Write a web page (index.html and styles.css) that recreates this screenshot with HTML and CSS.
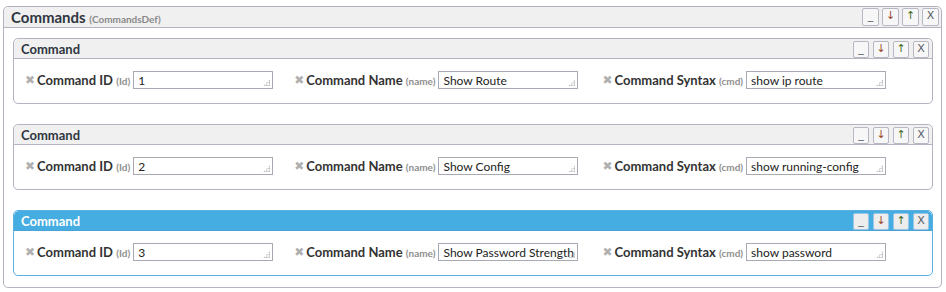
FILE: index.html
```html
<!DOCTYPE html>
<html lang="en">
<head>
    <meta charset="UTF-8">
    <title>Commands</title>
    <link rel="stylesheet" href="styles.css">
</head>
<body>
    <div class="panel outer">
        <div class="panel-head">
            <span class="panel-title">Commands <small>(CommandsDef)</small></span>
            <div class="tools">
                <button class="tool">_</button>
                <button class="tool down">&#8595;</button>
                <button class="tool up">&#8593;</button>
                <button class="tool">X</button>
            </div>
        </div>
        <div class="panel-body">

            <div class="panel item">
                <div class="panel-head">
                    <span class="panel-title">Command</span>
                    <div class="tools">
                        <button class="tool">_</button>
                        <button class="tool down">&#8595;</button>
                        <button class="tool up">&#8593;</button>
                        <button class="tool">X</button>
                    </div>
                </div>
                <div class="fields">
                    <div class="field f-id">
                        <span class="del">&#10006;</span>
                        <label>Command ID <small>(Id)</small></label>
                        <div class="box">1</div>
                    </div>
                    <div class="field f-name">
                        <span class="del">&#10006;</span>
                        <label>Command Name <small>(name)</small></label>
                        <div class="box">Show Route</div>
                    </div>
                    <div class="field f-cmd">
                        <span class="del">&#10006;</span>
                        <label>Command Syntax <small>(cmd)</small></label>
                        <div class="box">show ip route</div>
                    </div>
                </div>
            </div>

            <div class="panel item">
                <div class="panel-head">
                    <span class="panel-title">Command</span>
                    <div class="tools">
                        <button class="tool">_</button>
                        <button class="tool down">&#8595;</button>
                        <button class="tool up">&#8593;</button>
                        <button class="tool">X</button>
                    </div>
                </div>
                <div class="fields">
                    <div class="field f-id">
                        <span class="del">&#10006;</span>
                        <label>Command ID <small>(Id)</small></label>
                        <div class="box">2</div>
                    </div>
                    <div class="field f-name">
                        <span class="del">&#10006;</span>
                        <label>Command Name <small>(name)</small></label>
                        <div class="box">Show Config</div>
                    </div>
                    <div class="field f-cmd">
                        <span class="del">&#10006;</span>
                        <label>Command Syntax <small>(cmd)</small></label>
                        <div class="box">show running-config</div>
                    </div>
                </div>
            </div>

            <div class="panel item active">
                <div class="panel-head">
                    <span class="panel-title">Command</span>
                    <div class="tools">
                        <button class="tool">_</button>
                        <button class="tool down">&#8595;</button>
                        <button class="tool up">&#8593;</button>
                        <button class="tool">X</button>
                    </div>
                </div>
                <div class="fields">
                    <div class="field f-id">
                        <span class="del">&#10006;</span>
                        <label>Command ID <small>(Id)</small></label>
                        <div class="box">3</div>
                    </div>
                    <div class="field f-name">
                        <span class="del">&#10006;</span>
                        <label>Command Name <small>(name)</small></label>
                        <div class="box">Show Password Strength</div>
                    </div>
                    <div class="field f-cmd">
                        <span class="del">&#10006;</span>
                        <label>Command Syntax <small>(cmd)</small></label>
                        <div class="box">show password</div>
                    </div>
                </div>
            </div>

        </div>
    </div>
</body>
</html>
```

FILE: styles.css
```css
body {
    margin: 0;
    padding: 6px 0 0 3px;
    background: #fff;
    font-family: Lato, "Liberation Sans", sans-serif;
    color: #333;
}

.panel {
    border: 1px solid #b3b3c2;
    border-radius: 5px;
    background: #fff;
}

.outer {
    width: 937px;
    height: 280px;
}

.panel-head {
    display: flex;
    align-items: center;
    justify-content: space-between;
    background: #f0f0f0;
    border-bottom: 1px solid #b3b3c2;
    border-radius: 5px 5px 0 0;
}

.outer > .panel-head {
    height: 20px;
    padding: 0 2px 0 7px;
}

.panel-title {
    font-weight: bold;
    font-size: 15px;
    color: #2f3640;
}

.panel-title small {
    font-size: 10px;
    color: #8a8a8a;
}

.outer > .panel-body {
    padding: 10px 8px 10px 9px;
    display: flex;
    flex-direction: column;
    gap: 20px;
}

.item {
    height: 64px;
}

.item > .panel-head {
    height: 19px;
    padding: 0 3px 0 7px;
}

.item .panel-title {
    font-size: 13px;
}

.tools {
    display: flex;
    gap: 3px;
}

.tool {
    width: 17px;
    height: 18px;
    padding: 0 0 2px;
    border: 1px solid #b8b8c4;
    border-radius: 2px;
    background: #f7f7f7;
    font-family: "DejaVu Sans", sans-serif;
    font-size: 11px;
    line-height: 14px;
    color: #555a66;
    cursor: pointer;
}

.item .tool {
    width: 16px;
    height: 17px;
}

.item .tools {
    gap: 4px;
    margin-top: 2px;
}

.tool.down { color: #9a4a2a; }
.tool.up { color: #3f6b1e; }

.active {
    border-color: #5aaee0;
}

.active > .panel-head {
    background: #45ade1;
    border-bottom-color: #4aa3d6;
}

.active .panel-title {
    color: #fff;
}

.active .tool {
    background: #ededed;
    border-color: #9cc6e4;
}

.fields {
    display: flex;
    align-items: center;
    padding: 12px 0 0 11px;
}

.field {
    display: flex;
    align-items: center;
}

.f-name { margin-left: 21px; }
.f-cmd { margin-left: 24px; }

.del {
    font-family: "DejaVu Sans", sans-serif;
    font-size: 12px;
    color: #b0b0b0;
    margin-right: 2px;
}

.field label {
    font-size: 13px;
    font-weight: bold;
    color: #333;
    margin-right: 3px;
}

.field label small {
    font-size: 10px;
    color: #8f8f8f;
}

.box {
    position: relative;
    width: 134px;
    height: 16px;
    padding: 0 0 0 4px;
    border: 1px solid #a9a9b4;
    font-size: 12px;
    line-height: 18px;
    color: #222;
    white-space: nowrap;
    overflow: hidden;
}

.box::after {
    content: "";
    position: absolute;
    right: 2px;
    bottom: 2px;
    width: 7px;
    height: 7px;
    background:
        radial-gradient(circle, #a5a5a5 0.7px, transparent 1px) 0 0 / 2.5px 2.5px;
    clip-path: polygon(100% 0, 100% 100%, 0 100%);
}
```
